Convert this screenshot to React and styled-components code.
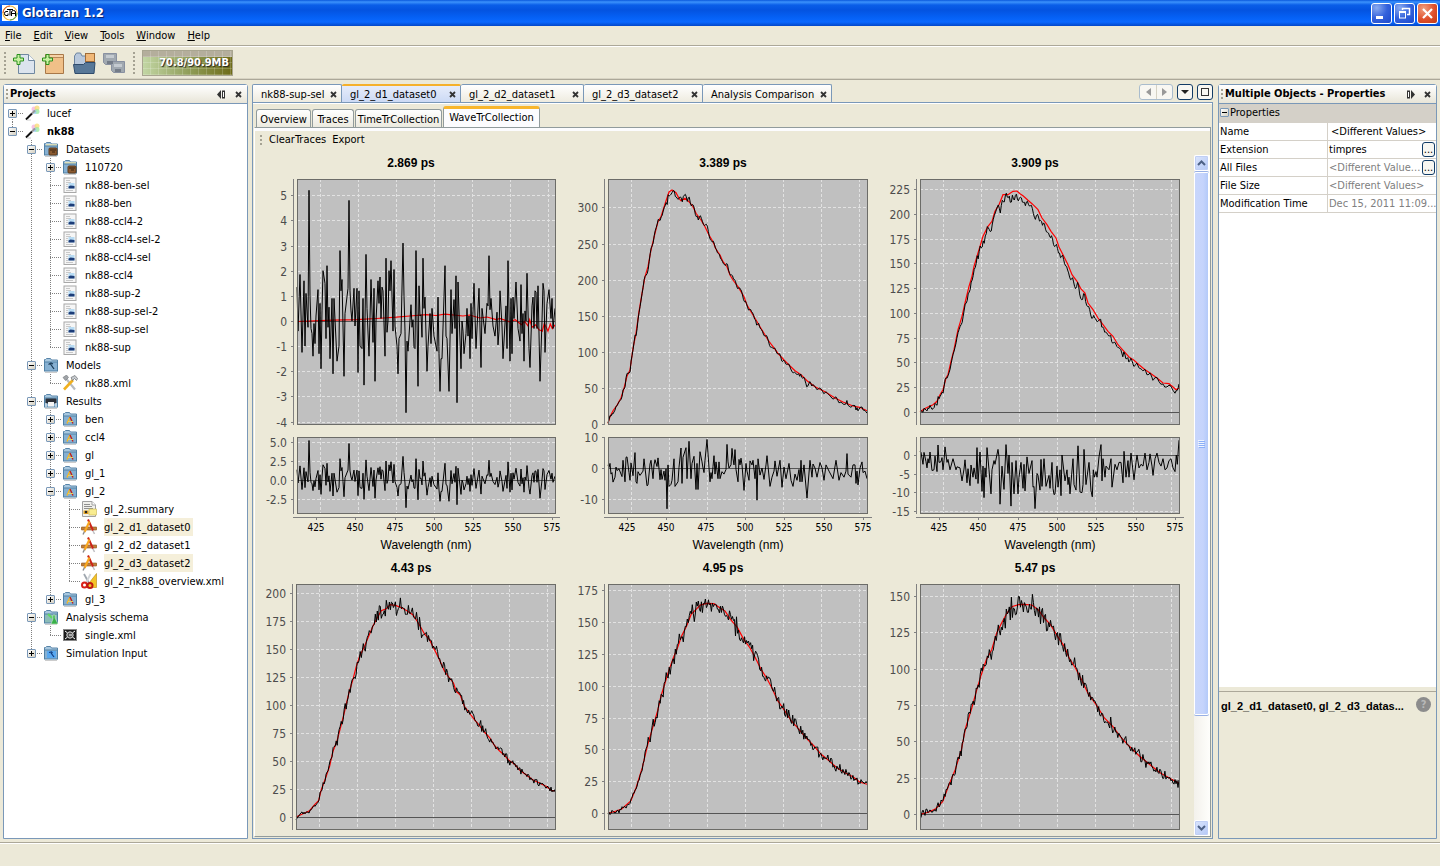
import React from 'react';
import styled, { createGlobalStyle, css } from 'styled-components';

const UI = '"DejaVu Sans Condensed", "DejaVu Sans", sans-serif';
const ARIAL = '"Liberation Sans", Arial, sans-serif';
const FACE = '#ece9d8';
const BLUE = '#7a98b8';

const Global = createGlobalStyle`
  * { box-sizing: border-box; }
  body { margin: 0; background: ${FACE}; font: 11px/14px ${UI}; color: #000; }
  button { font: inherit; color: inherit; padding: 0; margin: 0; border: 0; background: none; }
  ul { list-style: none; margin: 0; padding: 0; }
`;

/* ---------- frame ---------- */

const Frame = styled.div`
  height: 100vh;
  display: flex;
  flex-direction: column;
  overflow: hidden;
`;

const TitleBar = styled.header`
  height: 26px;
  flex: none;
  display: flex;
  align-items: center;
  gap: 4px;
  padding: 0 2px;
  background: linear-gradient(#0a58dc 0, #3c92fc 2px, #0a5ee8 5px, #0453e0 10px, #0560f4 17px, #0a68ff 22px, #0347c8 26px);
`;

const AppTitle = styled.h1`
  flex: 1;
  margin: 0;
  font: bold 13px/18px ${UI};
  color: #fff;
  text-shadow: 1px 1px 1px #0a1f6a;
`;

const WindowButtons = styled.div`
  display: flex;
  gap: 2px;
`;

const WindowButton = styled.button`
  width: 21px;
  height: 21px;
  border: 1px solid #fff;
  border-radius: 3px;
  display: flex;
  background: ${(p) =>
    p.$close
      ? 'radial-gradient(circle at 30% 25%, #f0a080, #e0502c 55%, #c03a14)'
      : 'radial-gradient(circle at 25% 20%, #8aabf0, #3462dc 50%, #1c48cc)'};
`;

const MenuBar = styled.nav`
  height: 21px;
  flex: none;
  display: flex;
  align-items: center;
  gap: 12px;
  padding: 0 5px;
  border-bottom: 1px solid #fff;
  box-shadow: inset 0 -1px #aca899;
`;

const MenuItem = styled.button`
  line-height: 18px;
  &::first-letter { text-decoration: underline; }
`;

const ToolBar = styled.div`
  height: 33px;
  flex: none;
  display: flex;
  align-items: center;
  padding-left: 4px;
  border-bottom: 1px solid #aca899;
  box-shadow: inset 0 -1px #d8d4c4;
`;

const Grip = styled.span`
  flex: none;
  width: 3px;
  height: ${(p) => p.$h}px;
  background: linear-gradient(#a5a293 0 2px, transparent 2px 4px) 0 0 / 2px 4px repeat-y;
`;

const ToolButton = styled.button`
  width: 30px;
  height: 28px;
  display: flex;
  align-items: center;
  justify-content: center;
`;

const ToolGroup = styled.div`
  display: flex;
  padding: 0 4px 0 2px;
`;

const MemoryButton = styled.button`
  width: 91px;
  height: 26px;
  margin-left: 6px;
  padding-right: 3px;
  border: 1px solid #a8a590;
  text-align: right;
  font-weight: bold;
  color: #fff;
  text-shadow: 1px 1px 1px #222;
  background:
    repeating-linear-gradient(90deg, transparent 0 7px, rgba(255, 255, 255, 0.18) 7px 8px),
    repeating-linear-gradient(transparent 0 5px, rgba(255, 255, 255, 0.18) 5px 6px),
    linear-gradient(#b4ae9c 0 6px, transparent 6px),
    linear-gradient(90deg, #c2d6a4, #8d9a54 55%, #6e6c18);
`;

const Workspace = styled.main`
  flex: 1;
  min-height: 0;
  display: flex;
  gap: 4px;
  padding: 4px 3px 3px;
`;

const StatusBar = styled.footer`
  height: 24px;
  flex: none;
  border-top: 1px solid #aca899;
  box-shadow: inset 0 1px #fff;
`;

/* ---------- side panels ---------- */

const Panel = styled.section`
  flex: none;
  width: ${(p) => p.$w}px;
  display: flex;
  flex-direction: column;
  border: 1px solid ${BLUE};
  border-radius: 3px 3px 0 0;
  background: #fff;
`;

const PanelHeader = styled.div`
  height: 19px;
  flex: none;
  display: flex;
  align-items: center;
  gap: 8px;
  padding: 0 4px 0 2px;
  border-bottom: 1px solid ${BLUE};
  background: linear-gradient(#fff, #e8e5d8);
`;

const PanelTitle = styled.h2`
  flex: 1;
  margin: 0;
  display: flex;
  align-items: center;
  gap: 1px;
  font: bold 11px/16px ${UI};
  white-space: nowrap;
`;

const GlyphButton = styled.button`
  width: 9px;
  height: 12px;
  display: flex;
  align-items: center;
  justify-content: center;
`;

/* ---------- tree ---------- */

const DOTS_V = 'repeating-linear-gradient(#808080 0 1px, transparent 1px 2px)';
const DOTS_H = 'repeating-linear-gradient(90deg, #808080 0 1px, transparent 1px 2px)';

const TreeRow = styled.div`
  height: 18px;
  display: flex;
  align-items: center;
`;

const guideShapes = {
  none: 'none',
  pass: `${DOTS_V} 8px 0 / 1px 18px no-repeat`,
  first: `${DOTS_V} 8px 9px / 1px 9px no-repeat, ${DOTS_H} 8px 9px / 11px 1px no-repeat`,
  tee: `${DOTS_V} 8px 0 / 1px 18px no-repeat, ${DOTS_H} 8px 9px / 11px 1px no-repeat`,
  end: `${DOTS_V} 8px 0 / 1px 9px no-repeat, ${DOTS_H} 8px 9px / 11px 1px no-repeat`,
};

const Guide = styled.span`
  flex: none;
  width: 19px;
  height: 18px;
  padding: 5px 4px;
  background: ${(p) => guideShapes[p.$shape]};
`;

const Handle = styled.button`
  width: 9px;
  height: 9px;
  display: block;
  border: 1px solid ${BLUE};
  border-radius: 1px;
  background:
    linear-gradient(#000, #000) 1px 3px / 5px 1px no-repeat,
    ${(p) => (p.$open ? '' : 'linear-gradient(#000, #000) 3px 1px / 1px 5px no-repeat,')}
    linear-gradient(135deg, #fff, #d4cfc0);
`;

const IconCell = styled.span`
  flex: none;
  width: 24px;
  height: 18px;
  display: flex;
  align-items: center;
  padding-left: 1px;
`;

const TreeLabel = styled.span`
  height: 18px;
  padding: 0 3px 0 0;
  line-height: 19px;
  white-space: nowrap;
  font-weight: ${(p) => (p.$bold ? 'bold' : 'normal')};
  background: ${(p) => (p.$selected ? '#f5efda' : 'none')};
`;

/* ---------- editor area ---------- */

const Editor = styled.section`
  flex: 1;
  min-width: 0;
  display: flex;
  flex-direction: column;
  margin-right: 1px;
`;

const TabStrip = styled.div`
  height: 18px;
  flex: none;
  display: flex;
`;

const DocTab = styled.div`
  width: ${(p) => p.$w}px;
  display: flex;
  align-items: center;
  justify-content: space-between;
  padding: 2px 3px 0 8px;
  border: 1px solid ${BLUE};
  border-bottom: 0;
  border-left-width: ${(p) => (p.$first ? 1 : 0)}px;
  border-radius: 2px 2px 0 0;
  background: linear-gradient(#fff, #eeebdf);
  ${(p) => p.$active && css`
    padding-top: 1px;
    border-top: 2px solid #f5b02a;
    background: linear-gradient(#e6ecfa, #ccdaf5);
  `}
`;

const TabLabel = styled.button`
  white-space: nowrap;
  line-height: 14px;
`;

const TabControls = styled.div`
  margin-left: auto;
  display: flex;
  gap: 4px;
`;

const NavPair = styled.div`
  height: 16px;
  display: flex;
  border: 1px solid #a9bccd;
  border-radius: 3px;
  background: #f8f7f2;
  & > button + button { border-left: 1px solid #d5d2c4; }
`;

const TabControl = styled.button`
  width: 16px;
  height: ${(p) => (p.$framed ? 16 : 14)}px;
  display: flex;
  align-items: center;
  justify-content: center;
  ${(p) => p.$framed && css`
    border: 1px solid #123c66;
    border-radius: 3px;
    background: #f8f7f2;
  `}
`;

const EditorBody = styled.div`
  flex: 1;
  min-height: 0;
  display: flex;
  flex-direction: column;
  border: 1px solid ${BLUE};
  padding: 1px;
  box-shadow: inset 0 1px #fff;
`;

const ViewTabs = styled.div`
  height: 23px;
  flex: none;
  display: flex;
  align-items: flex-end;
  padding-left: 2px;
`;

const ViewTab = styled.button`
  width: ${(p) => p.$w}px;
  height: ${(p) => (p.$active ? 21 : 18)}px;
  margin-right: ${(p) => (p.$active ? 0 : 1)}px;
  padding-top: ${(p) => (p.$active ? 0 : 2)}px;
  border: 1px solid #919b9c;
  border-bottom: 0;
  border-radius: 3px 3px 0 0;
  background: ${(p) => (p.$active ? '#fcfcfe' : 'linear-gradient(#fff, #eceadf)')};
  border-top: ${(p) => (p.$active ? '3px solid #f8b62c' : '1px solid #919b9c')};
  white-space: nowrap;
`;

const ViewPane = styled.div`
  flex: 1;
  min-height: 0;
  display: flex;
  flex-direction: column;
  border: 1px solid #919b9c;
  border-left-color: #fff;
  box-shadow: inset 0 3px #fcfcfe;
`;

const ViewActions = styled.div`
  height: 22px;
  flex: none;
  display: flex;
  align-items: center;
  gap: 6px;
  padding: 2px 4px 0 5px;
`;

const ScrollPane = styled.div`
  flex: 1;
  min-height: 0;
  display: flex;
  gap: 3px;
`;

const ChartGrid = styled.div`
  flex: 1;
  min-width: 0;
  overflow: hidden;
  display: grid;
  grid-template-columns: repeat(3, 1fr);
  grid-auto-rows: max-content;
  align-content: start;
`;

const ChartSvg = styled.svg`
  display: block;
  width: 100%;
`;

const ScrollBar = styled.div`
  flex: none;
  width: 16px;
  margin-top: 5px;
  padding-right: 1px;
  display: flex;
  flex-direction: column;
  background: linear-gradient(90deg, #f3f1ec, #fefefb);
`;

const ScrollButton = styled.button`
  height: 16px;
  flex: none;
  display: flex;
  align-items: center;
  justify-content: center;
  border: 1px solid #fff;
  border-radius: 2px;
  background: linear-gradient(135deg, #dce6fd, #b4c8f6);
  box-shadow: inset 0 0 0 1px #c0cff5;
`;

const ScrollTrack = styled.div`
  flex: 1;
  display: grid;
  grid-template-rows: 84fr 16fr;
`;

const ScrollThumb = styled.button`
  display: flex;
  align-items: center;
  justify-content: center;
  border: 1px solid #98b0e4;
  border-width: 1px 0;
  border-radius: 2px;
  box-shadow: inset 1px 1px #fff, inset -1px -1px #fff;
  background: linear-gradient(90deg, #c8d6fb, #c5d4fc 60%, #b0c8f8);
`;

/* ---------- properties ---------- */

const PropertyTable = styled.table`
  width: 100%;
  table-layout: fixed;
  border-collapse: collapse;
  th, td {
    height: 18px;
    padding: 1px 0 0 1px;
    line-height: 14px;
    border-bottom: 1px solid #d4d0c8;
    font-weight: normal;
    text-align: left;
    white-space: nowrap;
  }
`;

const GroupCell = styled.th`
  background: #d4d0c8;
`;

const GroupToggle = styled(Handle)`
  display: inline-block;
  margin-right: 1px;
`;

const ValueCell = styled.td`
  border-left: 1px solid #d4d0c8;
  color: ${(p) => (p.$dim ? '#808080' : '#000')};
`;

const ValueLine = styled.div`
  height: 15px;
  display: flex;
  align-items: center;
  justify-content: space-between;
  padding-left: ${(p) => (p.$indent ? 2 : 0)}px;
`;

const MoreButton = styled.button`
  flex: none;
  width: 13px;
  height: 15px;
  margin-right: 1px;
  border: 1px solid #123c66;
  border-radius: 3px;
  line-height: 12px;
  color: #000;
  background: #f8f7f2;
`;

const HelpArea = styled.div`
  height: 147px;
  flex: none;
  display: flex;
  justify-content: space-between;
  align-items: flex-start;
  padding: 5px 5px 0 2px;
  border-top: 1px solid #aca899;
  box-shadow: 0 -4px ${FACE};
  background: ${FACE};
`;

const HelpTitle = styled.strong`
  font: bold 11px/18px ${ARIAL};
  white-space: nowrap;
`;

const HelpButton = styled.button`
  flex: none;
  width: 15px;
  height: 15px;
  border-radius: 50%;
  background: #8c8c8c;
  color: #b8b8b8;
  font-weight: bold;
  line-height: 15px;
`;

const Spacer = styled.div`
  flex: 1;
`;

/* ---------- icons ---------- */

const Icon = ({ children, size = 16, box = 16 }) => (
  <svg width={size} height={size} viewBox={`0 0 ${box} ${box}`} aria-hidden="true">{children}</svg>
);

const LogoIcon = () => (
  <Icon>
    <rect width="16" height="16" fill="#fff" />
    <circle cx="8" cy="8" r="7" fill="#fff" stroke="#f0b840" strokeWidth="1.2" />
    <path d="M1 8a7 7 0 0 1 7-7" fill="none" stroke="#e06030" />
    <path d="M8 15a7 7 0 0 0 7-7" fill="none" stroke="#40a060" />
    <path d="M6 6.500H4Q2.500 6.500 2.500 8.500T4 10.500H6V8.500M5 4.500h6M8 4.500v6M9.500 11V7Q9.500 5.500 11.500 5.500T13.500 7v4M9.500 8.500h4" fill="none" stroke="#000" />
  </Icon>
);

const WandIcon = () => (
  <Icon>
    <circle cx="10" cy="4" r="2.500" fill="#f5a8d8" opacity=".7" />
    <circle cx="13" cy="3" r="2.500" fill="#f8dc78" opacity=".8" />
    <circle cx="13" cy="6.500" r="2.500" fill="#98e8a0" opacity=".8" />
    <circle cx="10.500" cy="7" r="2" fill="#98c8f8" opacity=".8" />
    <path d="M2 14.500 8 8.500" stroke="#111" strokeWidth="2" />
    <path d="M8 8.500 11 5.500" stroke="#999" strokeWidth="2" />
    <path d="M3 15h4" stroke="#ccc" />
  </Icon>
);

const badges = {
  box: (
    <g>
      <rect x="6" y="7" width="8" height="7" rx="1" fill="#8a5a30" stroke="#5c3a1c" />
      <path d="M7 9h6M9 11h3" stroke="#3a2410" />
    </g>
  ),
  hammer: <path d="M5.500 7.500 8 6l2 1M7.500 7l3.500 5" fill="none" stroke="#1c3c58" strokeWidth="1.300" />,
  disk: (
    <g>
      <rect x="2.500" y="5.500" width="11" height="5" rx="1" fill="#2c3038" />
      <path d="M3 10v4M13 10v4" stroke="#f4f4f4" />
      <rect x="5" y="9" width="6" height="4.500" fill="#f4f4f4" />
    </g>
  ),
  compass: (
    <g fill="none">
      <path d="M5 12.500 8 6" stroke="#f8b820" strokeWidth="1.400" />
      <path d="M8 6l3 6.500" stroke="#c02018" strokeWidth="1.400" />
      <path d="M6 10.500h5" stroke="#e8d060" />
    </g>
  ),
  flask: (
    <g>
      <path d="M5 5l4 4" stroke="#60d860" strokeWidth="2" />
      <path d="M10 6h2v3l3 6H8l2-5z" fill="#38b048" stroke="#d8f4d8" strokeWidth=".5" />
    </g>
  ),
  input: (
    <g>
      <rect x="4" y="6" width="9" height="7" fill="#58a8f0" />
      <path d="M6 7.500 8.500 7l1 1M8 8l3 4" fill="none" stroke="#103c80" strokeWidth="1.200" />
    </g>
  ),
};

const FolderIcon = ({ badge }) => (
  <Icon>
    <path d="M1.500 13V2.500h1L3.500 1.500h4l1 1.500h6V13z" fill="#a8c8e0" stroke="#5884a8" />
    {badge === 'box' && <path d="M3 4h11" stroke="#f0e8b0" strokeWidth="1.500" />}
    <rect x="1.500" y="5" width="13" height="9" fill={badge === 'flask' ? '#8cbcb8' : '#86b0d2'} stroke="#5080a4" />
    <path d="M2 15.500h12" stroke="#ccc" />
    {badges[badge]}
  </Icon>
);

const DocIcon = () => (
  <Icon>
    <rect x="2" y="1" width="12" height="14.500" fill="#f6f6f6" stroke="#a8a8a8" />
    <path d="M4 3.500h4M4 5.500h5M4 7.500h2M4 9.500h2M4 11.500h2M4 13.500h7" stroke="#c8c8c8" />
    <rect x="6.500" y="6" width="6" height="5.500" fill="#b8dcf4" />
    <path d="M6.500 9.500 8.500 8.500l4 .5v2.500h-6z" fill="#1c3c78" />
  </Icon>
);

const ToolsIcon = () => (
  <Icon>
    <path d="M4 3.500 13 14.500" stroke="#b8bcc0" strokeWidth="2.200" />
    <path d="M1 2.500 4.500 0l2 2.500L3.500 5.500z" fill="#a0a4a8" stroke="#707478" strokeWidth=".6" />
    <path d="M11 5 2 14.500" stroke="#f0b020" strokeWidth="2.600" />
    <path d="M9 2.500 13 .5l2.500 3-1 2-2-2-2 2z" fill="#c8ccd0" stroke="#686c70" strokeWidth=".7" />
  </Icon>
);

const SummaryIcon = () => (
  <Icon>
    <path d="M1.500.5H11l3.500 3.500v11.500h-13z" fill="#f0f0ec" stroke="#a0a0a0" />
    <path d="M11 .5V4h3.500" fill="#fff" stroke="#a0a0a0" />
    <path d="M3 3.500h6M3 5.500h8M3 7.500h9" stroke="#909090" />
    <rect x="8" y="8" width="7.500" height="6" fill="#f8ec90" stroke="#c8b450" strokeWidth=".6" />
    <rect x="2.500" y="9.500" width="5" height="3.500" fill="#e0a020" />
    <circle cx="5" cy="11" r="1.200" fill="#222" />
  </Icon>
);

const CompassIcon = () => (
  <Icon>
    <rect x="0" y="8" width="16" height="3" rx="1" fill="#c0803c" stroke="#8a5020" strokeWidth=".6" />
    <path d="M10.500 9 13.500 15" stroke="#c0c0c4" strokeWidth="1.500" />
    <path d="M7 .5l5 11" stroke="#cc2418" strokeWidth="2" />
    <path d="M8.500 2.500 3.500 13" stroke="#f8a820" strokeWidth="2.200" />
    <path d="M3.500 12.500 2 15.500" stroke="#888" strokeWidth="1.400" />
  </Icon>
);

const ScissorsIcon = () => (
  <Icon>
    <path d="M15.500.5v14h-11z" fill="#f4c428" stroke="#b88810" strokeWidth=".6" />
    <path d="M3 1l5 9" stroke="#a0a8b0" strokeWidth="1.800" />
    <path d="M9.500 1 5 10" stroke="#d0d4d8" strokeWidth="1.800" />
    <circle cx="3.500" cy="12" r="2.500" fill="none" stroke="#d82018" strokeWidth="2" />
    <circle cx="9" cy="12.500" r="2.500" fill="none" stroke="#c01810" strokeWidth="2" />
  </Icon>
);

const SchemaIcon = () => (
  <Icon>
    <rect x="1.500" y="2.500" width="13" height="11" fill="#1c1c1c" stroke="#888" />
    <circle cx="8" cy="8" r="3.200" fill="#555" stroke="#ddd" />
    <path d="M3 4l2 1.500M13 4l-2 1.500M3 12l2-1.500M13 12l-2-1.500M7 8h3" stroke="#fff" />
  </Icon>
);

const Plus = () => (
  <path d="M4 1.500h3V5h3.500v3H7v3.500H4V8H.5V5H4z" fill="#c8f0a0" stroke="#28901c" />
);

const NewFileIcon = () => (
  <Icon size={24} box={24}>
    <path d="M6.500 3.500h10l6 6v13h-16z" fill="#dce4ee" stroke="#7088a0" />
    <path d="M16.500 3.500v6h6" fill="#f8fafc" stroke="#7088a0" />
    <g transform="translate(1 2)"><Plus /></g>
  </Icon>
);

const NewProjectIcon = () => (
  <Icon size={24} box={24}>
    <path d="M3.500 3.500h18v19h-18z" fill="#f0c088" stroke="#a87848" />
    <path d="M5 6.500h16" stroke="#b88858" />
    <path d="M5 5h16" stroke="#fce4c8" />
    <g transform="translate(0 2)"><Plus /></g>
  </Icon>
);

const OpenProjectIcon = () => (
  <Icon size={24} box={24}>
    <path d="M2.500 14V5l2-3h4l1.500 3h6v9z" fill="#b8c8dc" stroke="#6c84a0" />
    <rect x="13.500" y="2.500" width="9" height="8" fill="#f0b878" stroke="#a06c38" />
    <path d="M1.500 13.500h10l2-2h9.500l-1 11h-19z" fill="#587898" stroke="#304c6c" />
  </Icon>
);

const SaveAllIcon = () => (
  <Icon size={24} box={24}>
    <g fill="#a0a8b0" stroke="#8890a0">
      <path d="M1.500 2.500h13v11h-11l-2-2z" />
      <path d="M9.500 10.500h13v11h-11l-2-2z" />
    </g>
    <path d="M4 4h8v3H4zM12 13h8v3h-8z" fill="#c4cad0" />
    <path d="M5 10h6v3H5zM13 18h6v3h-6z" fill="#747c88" />
  </Icon>
);

const CloseGlyph = () => (
  <svg width="7" height="7" viewBox="0 0 7 7" aria-hidden="true">
    <path d="M1 1l5 5M6 1 1 6" stroke="#333" strokeWidth="1.800" />
  </svg>
);

const SlideGlyph = ({ flip }) => (
  <svg width="9" height="9" viewBox="0 0 9 9" aria-hidden="true">
    <g transform={flip ? 'matrix(-1 0 0 1 9 0)' : undefined}>
      <path d="M0 4.500 4 0v9z" fill="#333" />
      <rect x="5.500" y="1" width="2" height="7" fill="#fff" stroke="#333" />
    </g>
  </svg>
);

const treeIcons = {
  wand: <WandIcon />,
  doc: <DocIcon />,
  tools: <ToolsIcon />,
  summary: <SummaryIcon />,
  compass: <CompassIcon />,
  scissors: <ScissorsIcon />,
  schema: <SchemaIcon />,
};

/* ---------- tree data ---------- */

const docs = ['ben-sel', 'ben', 'ccl4-2', 'ccl4-sel-2', 'ccl4-sel', 'ccl4', 'sup-2', 'sup-sel-2', 'sup-sel', 'sup'];
const closed = (label, badge) => ({ label, badge, open: false });

const tree = [
  { label: 'lucef', icon: 'wand', open: false },
  {
    label: 'nk88', icon: 'wand', bold: true, open: true,
    children: [
      {
        label: 'Datasets', badge: 'box', open: true,
        children: [closed('110720', 'box'), ...docs.map((d) => ({ label: `nk88-${d}`, icon: 'doc' }))],
      },
      { label: 'Models', badge: 'hammer', open: true, children: [{ label: 'nk88.xml', icon: 'tools' }] },
      {
        label: 'Results', badge: 'disk', open: true,
        children: [
          ...['ben', 'ccl4', 'gl', 'gl_1'].map((n) => closed(n, 'compass')),
          {
            label: 'gl_2', badge: 'compass', open: true,
            children: [
              { label: 'gl_2.summary', icon: 'summary' },
              { label: 'gl_2_d1_dataset0', icon: 'compass', selected: true },
              { label: 'gl_2_d2_dataset1', icon: 'compass' },
              { label: 'gl_2_d3_dataset2', icon: 'compass', selected: true },
              { label: 'gl_2_nk88_overview.xml', icon: 'scissors' },
            ],
          },
          closed('gl_3', 'compass'),
        ],
      },
      { label: 'Analysis schema', badge: 'flask', open: true, children: [{ label: 'single.xml', icon: 'schema' }] },
      closed('Simulation Input', 'input'),
    ],
  },
];

function TreeNodes({ nodes, guides = [] }) {
  return (
    <ul>
      {nodes.map((n, i) => {
        const last = i === nodes.length - 1;
        const top = guides.length === 0 && i === 0;
        return (
          <li key={n.label}>
            <TreeRow>
              {guides.map((on, g) => <Guide key={g} $shape={on ? 'pass' : 'none'} />)}
              <Guide $shape={top ? 'first' : last ? 'end' : 'tee'}>
                {n.open !== undefined && <Handle $open={n.open} aria-label={`Toggle ${n.label}`} />}
              </Guide>
              <IconCell>{n.badge ? <FolderIcon badge={n.badge} /> : treeIcons[n.icon]}</IconCell>
              <TreeLabel $bold={n.bold} $selected={n.selected}>{n.label}</TreeLabel>
            </TreeRow>
            {n.children && <TreeNodes nodes={n.children} guides={[...guides, !last]} />}
          </li>
        );
      })}
    </ul>
  );
}

/* ---------- chart data ---------- */

const pairs = (text) => text.trim().split(/\s+/).map((t) => t.split(',').map(Number));

function sample(points, x) {
  let i = 1;
  while (i < points.length - 1 && points[i][0] < x) i += 1;
  const [x0, y0] = points[i - 1];
  const [x1, y1] = points[i];
  const t = Math.min(1, Math.max(0, (x - x0) / (x1 - x0)));
  return y0 + (y1 - y0) * t;
}

function noise(seed) {
  let s = seed;
  return () => {
    s = (s * 16807) % 2147483647;
    return s / 2147483647 - 0.5;
  };
}

const trace1 = pairs(`142,1.35 145,-.4 151,1.85 157,-1.25 163,1.6 166,-1 169,1.1 175,-.25 178,5.2 181,1 184,-.3 187,-.5 190,-1.4 193,-.1 196,-.9 199,.2
205,1.25 208,-1.3 211,.7 214,-1.9 217,.4 220,2 226,1.5 229,-.7 232,2.2 235,-.25 238,.55 241,-1.5 247,.9 250,-2.1 253,.9 262,-1.6 268,-1 271,2.8 274,1.2
277,1.65 280,-.2 283,-2.2 286,.3 295,1.3 298,4.8 301,1.2 304,.4 307,0 313,1.3 316,-.2 322,1.3 325,-2.05 328,1.2 331,-1 337,-1.1 340,.9 343,-2.55 349,2.65
352,.5 358,-1.4 364,1.65 370,-.85 373,1.3 376,-2.4 379,0 385,1.6 388,.7 391,1.75 394,.1 397,1.35 400,1.2 406,-1.4 409,2.5 412,-.45 415,0 418,2 421,1.2
424,2.4 430,-.4 433,2.05 436,-.2 442,-1 445,-2.1 448,-.7 454,-.5 460,3.1 463,1 466,-.4 469,-3.65 472,-.8 475,-1.2 484,.65 487,-.25 490,.05 493,-1.05
496,-1.1 499,2.8 502,0 505,-2.6 508,1.4 511,.2 514,.25 517,-.65 520,2.5 523,.5 526,.95 532,-2 535,-1 541,.3 544,-.9 547,.5 553,-.6 562,-1.2 565,.95
568,-1.3 571,-2.8 574,-1.5 577,-1.5 586,2.2 589,-.6 592,-.7 598,-2.8 604,1.25 607,-.5 613,.85 616,-.3 619,1.8 622,-3.25 625,1.55 634,-1.9 637,0 640,-.4
643,-1.3 649,-.5 652,.5 655,-.6 658,.2 661,-1.5 664,.7 667,-.7 673,1.5 679,-1.1 688,1.3 694,-1.85 697,.5 706,-.5 712,.7 715,.6 718,2.6 721,.45 724,.9
730,-.2 736,-.6 742,.35 745,-.95 748,-.4 751,1.2 757,-.2 760,-1.5 769,.6 772,-1.1 775,2.4 781,-1.6 784,.9 787,-1.3 790,.95 793,.1 799,1.55 805,-.3
811,-.8 814,1.45 817,-.5 820,.3 823,-1.6 826,.4 829,0 832,1.9 838,-1.1 841,-1.85 847,.6 850,.95 853,-.3 856,1.2 859,1.15 862,-.3 865,1.4 871,-2.4 877,0
880,1.5 883,1.2 886,-1.25 892,.7 898,1.25 904,.1 907,.9 910,-.3 916,.5`);

const fit1 = pairs(`142,-.02 250,.03 320,.05 380,.1 440,.15 480,.2 530,.25 560,.22 585,.27 600,.25 640,.2 660,.24 690,.12 712,.16 740,.05 750,.1 780,-.03
797,.05 815,-.15 825,-.02 835,-.2 840,.05 847,-.25 858,-.15 868,-.35 878,-.4 884,-.1 895,-.4 902,-.12 908,-.3 916,-.15`);

const res2 = pairs(`145,1 148,.2 151,1.5 154,-2 157,-1.5 160,-4.6 166,-3 169,.3 172,-.8 178,-.3 187,-2.8 190,2.5 196,-4.5 199,3.5 202,3.6 208,-1.5 211,-4
214,1.7 220,-2.5 226,5 229,-4.5 232,-5 235,-1.2 241,-2.4 250,-1 253,3 262,-5.8 265,-5.5 271,1.3 274,2.5 280,-3.5 283,1 286,2.7 292,.5 295,3.3 301,-3.8
304,-.5 307,-3.7 313,-1 316,-4 319,-.3 322,-13.3 325,1 328,-6 334,-5.3 337,-4 343,3 346,-6 355,-4.5 358,.2 364,6.5 367,-5 370,3.5 379,6.6 382,-3.5 388,8.7
394,-3.5 397,1.5 403,3.8 409,-7 412,1.5 415,-7 421,5.3 427,2 430,0 433,-1.5 436,2.5 442,9.3 451,-4.5 454,-1.5 457,-3.5 460,.5 463,4 466,-2 469,2 475,-3.5
478,2 481,-3.5 487,-1.2 493,-2 499,-.5 502,7.7 505,2 508,0 514,1 517,6.4 520,3 523,1 526,6 529,-.5 535,-4.5 538,2.8 541,1 544,3.2 547,1 553,-7.3 559,1.5
562,-1 568,-4 571,2.3 577,1 580,2.5 586,-3.5 589,1 592,-10.5 595,3 601,-2.3 607,0 613,-3.7 619,1 622,4 631,-6 637,-3 643,-1 646,2.3 652,-2.7 661,2.5
667,-6.3 673,.3 679,-3.5 688,1.5 694,-4 700,-6 706,-2 712,-4 718,-.5 721,-4.5 724,2.5 727,-4.5 733,1 742,-9.8 751,2.5 757,-3 760,1.3 766,0 772,-3 781,1.8
787,0 793,-4 799,1 808,-1 820,-3.5 829,2.5 838,-4 844,-1.5 853,-3 859,-1 862,4.7 865,-2 874,-3 880,1 886,1 889,-5 892,-1 895,-5.5 901,0 907,2 910,-1.5
916,-1 922,-3.5`);

const fit2 = pairs(`145,760 151,740 160,722 172,706 184,684 193,655 202,618 211,600 220,535 229,490 238,425 247,370 256,320 265,290 274,240 286,190 295,155
304,140 316,102 328,66 337,60 349,68 358,85 364,92 376,85 388,95 400,110 409,130 424,150 436,170 448,195 460,215 469,238 481,255 490,275 502,290 511,315
520,330 535,350 553,380 562,405 574,425 586,445 601,470 613,490 625,510 640,530 655,550 673,570 688,585 706,602 724,614 742,632 766,650 796,665 826,684
850,696 880,708 900,712 922,722`);

const res3 = pairs(`121,1 124,.7 130,-2.5 133,.7 139,-1.8 142,-3.5 145,-1 148,-2.2 151,.8 157,-4.2 163,-4 166,-.3 172,-4.5 175,2.7 178,-2 184,-1.8 187,-.7
190,-4 193,-1.5 196,2.2 202,-2 205,-1.2 211,-4 220,-1 229,-4 232,-3.2 241,-3.5 247,-7 253,-3.8 256,-1.3 262,-7.5 265,-3.7 271,-8.3 274,-2.7 280,-6 283,-3.5
289,-6.5 292,2 295,-7.7 301,.8 307,-9.8 310,-3 313,-11.5 316,-3.5 319,-6 322,2 328,-4 334,-10.5 337,-4 343,-1.5 346,-2.5 355,1.5 358,-.5 361,-13.3 367,-3
373,-9.3 379,2.8 385,-5 388,0 394,-13.8 397,-2 403,-10.5 409,-1.5 415,-10.5 418,-6 424,-2 430,-9 433,-2.5 436,-9.7 442,-.5 448,-5 457,-1.5 460,-8.7
463,-8.5 466,-14.5 472,-5 475,-5.5 481,-9.5 484,-1.2 487,-8.5 493,-1 499,-8.5 508,-5.5 511,-9 514,-5.5 517,-2 520,-9 523,-10.7 526,-10.5 532,-3 535,-8.7
541,-4 544,-11 547,0 556,-7 562,-4 565,-8 568,-6 571,-10.5 580,-1 583,-8 589,-9.5 595,2.5 601,-10 607,-10.2 610,-8 613,1.5 619,-8 628,-2 634,-9.7 638,-11.3
641,-4 644,-6 649,-4.5 652,-6 658,-.5 664,2.8 667,-7 670,-1 676,-6 679,-3 688,-4 694,-1 697,-8.7 706,-2.5 712,-4 718,-2 724,-2 730,-7.5 733,1 739,-6
745,-1.5 748,-6 754,.5 763,-6.7 769,-2 772,0 778,-3.5 784,-2.5 790,-3 796,.5 802,-4 808,-2 811,.3 817,-3 820,-5.5 826,-1 832,.5 838,-2 844,-3 850,-1
856,-4 862,-3.5 868,-1.5 874,-1 880,-3.5 886,-4.5 890,0 893,-2.5 898,4`);

const fit3 = pairs(`121,727 133,718 145,712 160,705 172,695 181,675 190,660 199,625 205,615 214,575 223,540 235,480 247,440 256,400 268,350 277,320 283,290
292,260 301,230 310,200 325,170 337,155 346,125 358,105 370,75 385,75 400,65 412,64 421,72 430,78 445,92 457,102 475,120 487,145 502,165 514,185 529,205
538,232 550,255 565,285 577,315 592,335 604,358 616,370 625,400 640,420 655,445 670,465 685,485 700,500 715,525 733,545 748,562 763,572 778,585 796,600
811,610 832,625 850,640 868,642 880,652 889,660 898,655`);

const fit4 = pairs(`139,787 160,777 180,768 195,750 207,738 215,705 228,670 240,635 250,590 262,560 275,510 285,470 298,415 310,375 320,335 330,305 345,275
355,250 370,215 380,195 395,168 410,162 422,150 440,153 458,160 472,168 490,180 500,195 512,215 525,238 540,255 555,285 570,315 585,350 600,370 612,385
620,410 632,420 645,455 660,475 675,495 690,512 705,532 720,548 735,572 750,588 765,602 780,618 795,628 810,645 830,660 850,675 870,685 890,695 908,708 917,708`);

const fit5 = pairs(`102,777 120,771 135,764 157,740 170,700 185,640 197,575 210,520 222,470 230,425 240,385 250,345 260,310 270,280 280,245 292,215 303,180
315,165 325,152 340,147 358,148 372,160 385,170 398,195 415,220 430,255 445,280 458,310 472,345 485,370 498,400 512,438 527,465 545,500 560,520 580,550
600,575 617,600 635,618 655,640 675,655 695,668 710,683 728,690`);

const fit6 = pairs(`855,779 875,773 893,762 910,740 925,690 940,645 955,585 965,520 980,460 992,405 1003,360 1015,315 1028,285 1040,235 1052,205 1065,175
1078,155 1092,150 1105,149 1125,151 1140,165 1155,190 1170,210 1187,245 1203,275 1215,310 1230,340 1245,375 1260,415 1280,450 1300,490 1320,515 1340,548
1360,575 1385,605 1410,630 1435,655 1460,672 1480,686`);

const range = (from, to, step) => {
  const out = [];
  for (let v = from; v <= to; v += step) out.push(v);
  return out;
};

function normalise(points, zero, unit) {
  const a = points[0][0];
  const b = points[points.length - 1][0];
  return points.map(([x, y]) => [(x - a) / (b - a), (zero - y) / unit]);
}

const values = (points) => normalise(points, 0, -1);
const STEPS = range(0, 258, 1).map((i) => i / 258);

function withResidual(fit, residual) {
  return STEPS.map((t) => [t, sample(fit, t) + sample(residual, t)]);
}

function withNoise(fit, seed, low, high) {
  const rnd = noise(seed);
  const peak = Math.max(...fit.map((p) => p[1]));
  return STEPS.map((t) => {
    const v = sample(fit, t);
    return [t, v + (rnd() + rnd()) * (low + (high * v) / peak)];
  });
}

const f2 = normalise(fit2, 762, 2.165);
const f3 = normalise(fit3, 727, 2.973);
const f4 = normalise(fit4, 787, 3.36);
const f5 = normalise(fit5, 776, 3.817);
const f6 = normalise(fit6, 778, 4.36);
const r1 = values(trace1);
const r2 = values(res2);
const r3 = values(res3);

const charts = [
  { title: '2.869 ps', left: 42, fit: values(fit1), data: r1, zero: 171, unit: 25.13, ticks: range(-4, 5, 1),
    residual: { data: r1, zero: 330, unit: 7.6, ticks: [-2.5, 0, 2.5, 5], digits: 1 } },
  { title: '3.389 ps', left: 41, fit: f2, data: withResidual(f2, r2), zero: 274, unit: 0.7217, ticks: range(0, 300, 50),
    residual: { data: r2, zero: 318, unit: 3.07, ticks: [-10, 0, 10], digits: 0 } },
  { title: '3.909 ps', left: 41, fit: f3, data: withResidual(f3, r3), zero: 262, unit: 0.991, ticks: range(0, 225, 25),
    residual: { data: r3, zero: 305, unit: 3.7, ticks: [-15, -10, -5, 0], digits: 0 } },
  { title: '4.43 ps', left: 41, fit: f4, data: withNoise(f4, 77, 3, 7), zero: 262, unit: 1.12, ticks: range(0, 200, 25) },
  { title: '4.95 ps', left: 41, fit: f5, data: withNoise(f5, 4211, 3, 7), zero: 258, unit: 1.272, ticks: range(0, 175, 25) },
  { title: '5.47 ps', left: 41, fit: f6, data: withNoise(f6, 953, 3, 6), zero: 259, unit: 1.453, ticks: range(0, 150, 25) },
];

const RIGHT = 300;

function Plot({ left, top, bottom, zero, unit, ticks, digits = 0, data, fit }) {
  const w = RIGHT - left;
  const line = (pts) => pts.map(([t, v]) => `${(left + t * w).toFixed(1)},${(zero - v * unit).toFixed(1)}`).join(' ');
  const at = (v) => Math.round(zero - v * unit);
  return (
    <g>
      <rect x={left} y={top} width={w} height={bottom - top} fill="#c0c0c0" />
      <g stroke="#e2e2e2" strokeDasharray="3 2" shapeRendering="crispEdges">
        {ticks.map((v) => <path key={v} d={`M${left} ${at(v) + 0.5}H${RIGHT}`} />)}
        {range(0, 6, 1).map((i) => <path key={i} d={`M${left + 23.5 + i * 38} ${top}V${bottom}`} />)}
      </g>
      <path d={`M${left} ${zero + 0.5}H${RIGHT}`} stroke="#555" shapeRendering="crispEdges" />
      {fit && <polyline points={line(fit)} fill="none" stroke="#f00" strokeWidth="1.200" />}
      <polyline points={line(data)} fill="none" stroke="#000" strokeLinejoin="bevel" />
      <rect x={left + 0.5} y={top + 0.5} width={w} height={bottom - top} fill="none" stroke="#6c6c68" />
      <path d={`M${left - 3.5} ${top}V${bottom + 1}`} stroke="#808080" shapeRendering="crispEdges" />
      {ticks.map((v) => (
        <g key={v}>
          <path d={`M${left - 6} ${at(v) + 0.5}h3`} stroke="#808080" shapeRendering="crispEdges" />
          <text x={left - 10} y={at(v) + 5} textAnchor="end" fontFamily={UI} fontSize="12" fill="#4c4c4c">{v.toFixed(digits)}</text>
        </g>
      ))}
    </g>
  );
}

function Chart({ title, residual, left, ...main }) {
  return (
    <ChartSvg viewBox="0 0 312 405" role="img" aria-label={title}>
      <text x="156" y="17" textAnchor="middle" fontFamily={ARIAL} fontSize="12" fontWeight="bold">{title}</text>
      <Plot left={left} top={29} bottom={274} {...main} />
      {residual && (
        <g>
          <Plot left={left} top={287} bottom={363} {...residual} />
          <path d={`M${left - 4} 367.500H305`} stroke="#808080" shapeRendering="crispEdges" />
          {range(0, 6, 1).map((i) => {
            const x = left + 19 + Math.round(i * 39.3);
            return (
              <g key={i}>
                <path d={`M${x + 0.5} 367v3`} stroke="#808080" shapeRendering="crispEdges" />
                <text x={x} y="381" textAnchor="middle" fontFamily={UI} fontSize="10">{425 + i * 25}</text>
              </g>
            );
          })}
          <text x="171" y="399" textAnchor="middle" fontFamily={ARIAL} fontSize="12">Wavelength (nm)</text>
        </g>
      )}
    </ChartSvg>
  );
}

/* ---------- page data ---------- */

const docTabs = [
  ['nk88-sup-sel', 90], ['gl_2_d1_dataset0', 119], ['gl_2_d2_dataset1', 123], ['gl_2_d3_dataset2', 119], ['Analysis Comparison', 129],
];
const viewTabs = [['Overview', 55], ['Traces', 42], ['TimeTrCollection', 87], ['WaveTrCollection', 97]];
const properties = [
  { name: 'Name', value: '<Different Values>', indent: true },
  { name: 'Extension', value: 'timpres', more: true },
  { name: 'All Files', value: '<Different Value...', dim: true, more: true },
  { name: 'File Size', value: '<Different Values>', dim: true },
  { name: 'Modification Time', value: 'Dec 15, 2011 11:09...', dim: true },
];

export default function App() {
  return (
    <Frame>
      <Global />
      <TitleBar>
        <LogoIcon />
        <AppTitle>Glotaran 1.2</AppTitle>
        <WindowButtons>
          <WindowButton aria-label="Minimize"><Icon size={19} box={19}><path d="M4 13.500h7" stroke="#fff" strokeWidth="3" /></Icon></WindowButton>
          <WindowButton aria-label="Restore">
            <Icon size={19} box={19}>
              <path d="M7.500 6V4.500h7v6H12M7 4.500h8" fill="none" stroke="#fff" strokeWidth="1.500" />
              <rect x="4.500" y="8" width="6" height="6" fill="none" stroke="#fff" />
              <path d="M4 8h7" stroke="#fff" strokeWidth="2" />
            </Icon>
          </WindowButton>
          <WindowButton $close aria-label="Close"><Icon size={19} box={19}><path d="M5 5l9 9M14 5l-9 9" stroke="#fff" strokeWidth="2.200" /></Icon></WindowButton>
        </WindowButtons>
      </TitleBar>
      <MenuBar>
        {['File', 'Edit', 'View', 'Tools', 'Window', 'Help'].map((m) => <MenuItem key={m}>{m}</MenuItem>)}
      </MenuBar>
      <ToolBar>
        <Grip $h={22} />
        <ToolGroup>
          <ToolButton aria-label="New file"><NewFileIcon /></ToolButton>
          <ToolButton aria-label="New project"><NewProjectIcon /></ToolButton>
          <ToolButton aria-label="Open project"><OpenProjectIcon /></ToolButton>
          <ToolButton aria-label="Save all" disabled><SaveAllIcon /></ToolButton>
        </ToolGroup>
        <Grip $h={22} />
        <MemoryButton>70.8/90.9MB</MemoryButton>
      </ToolBar>

      <Workspace>
        <Panel $w={245}>
          <PanelHeader>
            <PanelTitle><Grip $h={10} />Projects</PanelTitle>
            <GlyphButton aria-label="Minimize panel"><SlideGlyph /></GlyphButton>
            <GlyphButton aria-label="Close panel"><CloseGlyph /></GlyphButton>
          </PanelHeader>
          <TreeNodes nodes={tree} />
        </Panel>

        <Editor>
          <TabStrip>
            {docTabs.map(([name, w], i) => (
              <DocTab key={name} $w={w} $first={i === 0} $active={i === 1}>
                <TabLabel>{name}</TabLabel>
                <GlyphButton aria-label={`Close ${name}`}><CloseGlyph /></GlyphButton>
              </DocTab>
            ))}
            <TabControls>
              <NavPair>
                <TabControl aria-label="Previous tab"><svg width="5" height="8"><path d="M5 0v8L0 4z" fill="#999" /></svg></TabControl>
                <TabControl aria-label="Next tab"><svg width="5" height="8"><path d="M0 0v8l5-4z" fill="#999" /></svg></TabControl>
              </NavPair>
              <TabControl $framed aria-label="Tab list"><svg width="8" height="4"><path d="M0 0h8L4 4z" fill="#222" /></svg></TabControl>
              <TabControl $framed aria-label="Maximize"><svg width="8" height="8"><rect x=".5" y=".5" width="7" height="7" fill="none" stroke="#333" /></svg></TabControl>
            </TabControls>
          </TabStrip>
          <EditorBody>
            <ViewTabs>
              {viewTabs.map(([name, w], i) => <ViewTab key={name} $w={w} $active={i === 3}>{name}</ViewTab>)}
            </ViewTabs>
            <ViewPane>
              <ViewActions>
                <Grip $h={10} />
                <button>ClearTraces</button>
                <button>Export</button>
              </ViewActions>
              <ScrollPane>
                <ChartGrid>
                  {charts.map((c) => <Chart key={c.title} {...c} />)}
                </ChartGrid>
                <ScrollBar>
                  <ScrollButton aria-label="Scroll up"><svg width="9" height="6"><path d="M1 5l3.500-3.500L8 5" fill="none" stroke="#4d6185" strokeWidth="2" /></svg></ScrollButton>
                  <ScrollTrack>
                    <ScrollThumb aria-label="Scroll position"><svg width="7" height="8"><path d="M0 .5h6M0 2.500h6M0 4.500h6M0 6.500h6" stroke="#eef4fe" /><path d="M1 1.500h6M1 3.500h6M1 5.500h6M1 7.500h6" stroke="#8cb0f8" /></svg></ScrollThumb>
                  </ScrollTrack>
                  <ScrollButton aria-label="Scroll down"><svg width="9" height="6"><path d="M1 1l3.500 3.500L8 1" fill="none" stroke="#4d6185" strokeWidth="2" /></svg></ScrollButton>
                </ScrollBar>
              </ScrollPane>
            </ViewPane>
          </EditorBody>
        </Editor>

        <Panel $w={219}>
          <PanelHeader>
            <PanelTitle><Grip $h={10} />Multiple Objects - Properties</PanelTitle>
            <GlyphButton aria-label="Minimize panel"><SlideGlyph flip /></GlyphButton>
            <GlyphButton aria-label="Close panel"><CloseGlyph /></GlyphButton>
          </PanelHeader>
          <PropertyTable>
            <thead>
              <tr><GroupCell colSpan={2}><GroupToggle $open aria-label="Collapse Properties" />Properties</GroupCell></tr>
            </thead>
            <tbody>
              {properties.map((p) => (
                <tr key={p.name}>
                  <th scope="row">{p.name}</th>
                  <ValueCell $dim={p.dim}>
                    <ValueLine $indent={p.indent}>
                      <span>{p.value}</span>
                      {p.more && <MoreButton aria-label={`Edit ${p.name}`}>...</MoreButton>}
                    </ValueLine>
                  </ValueCell>
                </tr>
              ))}
            </tbody>
          </PropertyTable>
          <Spacer />
          <HelpArea>
            <HelpTitle>gl_2_d1_dataset0, gl_2_d3_datas...</HelpTitle>
            <HelpButton aria-label="Help">?</HelpButton>
          </HelpArea>
        </Panel>
      </Workspace>
      <StatusBar />
    </Frame>
  );
}
